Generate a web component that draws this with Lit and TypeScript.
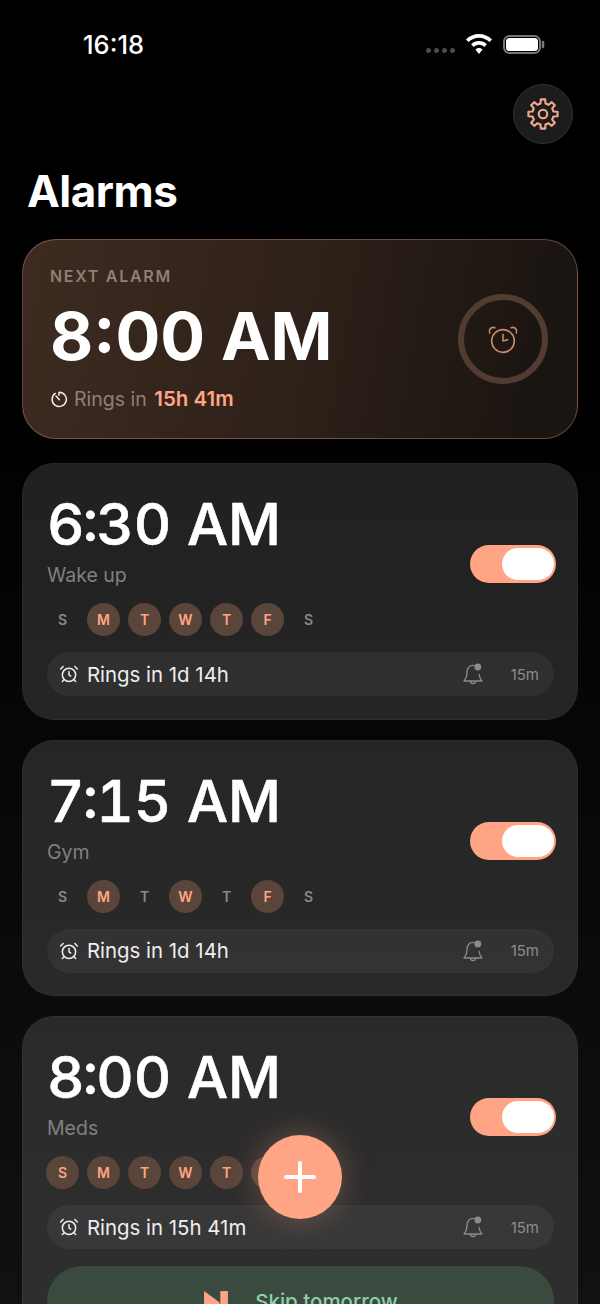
import { LitElement, html, css, svg } from 'lit';
import { customElement } from 'lit/decorators.js';

type Alarm = { hour: string; rest: string; label: string; days: boolean[]; rings: string; skip?: boolean };

const LETTERS = ['S', 'M', 'T', 'W', 'T', 'F', 'S'];

const ALARMS: Alarm[] = [
  { hour: '6', rest: '30 AM', label: 'Wake up', days: [false, true, true, true, true, true, false], rings: 'Rings in 1d 14h' },
  { hour: '7', rest: '15 AM', label: 'Gym', days: [false, true, false, true, false, true, false], rings: 'Rings in 1d 14h' },
  { hour: '8', rest: '00 AM', label: 'Meds', days: [true, true, true, true, true, true, false], rings: 'Rings in 15h 41m', skip: true }
];

// eight rounded teeth, outline built from polar points
function gearPoints() {
  const pts: string[] = [];
  for (let i = 0; i < 8; i++) {
    const a = (i * Math.PI) / 4 - Math.PI / 2;
    const step = [[-0.235, 7.6], [-0.15, 10.4], [0.15, 10.4], [0.235, 7.6]];
    for (const [d, r] of step) {
      pts.push(`${(12 + r * Math.cos(a + d)).toFixed(2)},${(12 + r * Math.sin(a + d)).toFixed(2)}`);
    }
  }
  return pts.join(' ');
}

const alarmIcon = svg`
  <circle cx="12" cy="13" r="8"></circle>
  <path d="M12 9v4l2 1.5"></path>
  <path d="M5 3 2 6"></path>
  <path d="m22 6-3-3"></path>
  <path d="M6.4 18.7 4 21"></path>
  <path d="M17.6 18.7 20 21"></path>`;

@customElement('app-root')
export class AppRoot extends LitElement {
  static styles = css`
    :host {
      display: block;
      width: 600px;
      height: 1304px;
      overflow: hidden;
      position: relative;
      background: linear-gradient(180deg, #000 0%, #000 30%, #111 100%);
      font-family: Inter, 'Noto Sans', sans-serif;
      color: #fff;
    }

    svg {
      display: block;
      fill: none;
      stroke: currentColor;
      stroke-linecap: round;
      stroke-linejoin: round;
    }

    .status {
      height: 84px;
      box-sizing: border-box;
      padding: 30px 55px 0 83px;
      display: flex;
      align-items: flex-start;
    }

    .clock {
      font-size: 25.5px;
      line-height: 29px;
      font-weight: 500;
    }

    .status-right {
      margin-left: auto;
      display: flex;
      align-items: center;
      height: 28px;
    }

    .dots {
      display: flex;
      gap: 3px;
      margin: 12px 11px 0 0;
    }

    .dots span {
      width: 5px;
      height: 5px;
      border-radius: 50%;
      background: #4a4a4a;
    }

    .wifi {
      width: 26px;
      height: 20px;
      margin-right: 11px;
      fill: #fff;
      stroke: none;
    }

    .battery {
      width: 42px;
      height: 19px;
    }

    .top {
      display: flex;
      justify-content: flex-end;
      padding-right: 27px;
    }

    .settings {
      width: 60px;
      height: 60px;
      box-sizing: border-box;
      border-radius: 50%;
      background: #1c1c1c;
      border: 1px solid #333;
      display: flex;
      align-items: center;
      justify-content: center;
      color: #f2a88a;
    }

    .settings svg {
      width: 34px;
      height: 34px;
    }

    h1 {
      margin: 20px 0 0 27px;
      font-size: 44px;
      line-height: 54px;
      font-weight: 700;
      letter-spacing: -0.5px;
    }

    .list {
      margin: 21px 22px 0;
      display: flex;
      flex-direction: column;
      gap: 20px;
    }

    .hero {
      box-sizing: border-box;
      height: 200px;
      margin-bottom: 4px;
      border-radius: 34px;
      border: 1px solid rgba(255, 180, 150, 0.32);
      background: linear-gradient(100deg, #3d2b21 0%, #2e2119 50%, #1b1511 90%);
      padding: 0 29px 0 27px;
      display: flex;
      align-items: center;
      justify-content: space-between;
    }

    .hero-text {
      align-self: flex-start;
      padding-top: 26px;
    }

    .eyebrow {
      font-size: 16px;
      line-height: 20px;
      font-weight: 600;
      letter-spacing: 1.7px;
      color: #8f7f75;
    }

    .hero-time {
      margin-top: 9px;
      font-size: 66.5px;
      line-height: 82px;
      font-weight: 700;
    }

    .hero-sub {
      margin-top: 8px;
      display: flex;
      align-items: center;
      gap: 6px;
      font-size: 19.5px;
      line-height: 28px;
      color: #8d8178;
    }

    .hero-sub svg {
      width: 18px;
      height: 18px;
      color: #f4ece6;
    }

    .hero-sub b {
      margin-left: 2px;
      font-size: 20.5px;
      font-weight: 600;
      color: #ffa585;
    }

    .ring {
      width: 90px;
      height: 90px;
      box-sizing: border-box;
      border-radius: 50%;
      border: 6px solid #523c32;
      display: flex;
      align-items: center;
      justify-content: center;
      color: #c98a68;
    }

    .ring svg {
      width: 32px;
      height: 32px;
    }

    .card {
      box-sizing: border-box;
      border-radius: 32px;
      border: 1px solid rgba(255, 255, 255, 0.03);
      background: rgba(255, 255, 255, 0.125);
      padding: 24px 23px 22.5px 24px;
    }

    .card-top {
      display: flex;
      align-items: flex-end;
      justify-content: space-between;
    }

    .time {
      font-size: 58px;
      line-height: 72px;
      font-weight: 500;
      font-variant-numeric: tabular-nums;
      -webkit-text-stroke: 0.6px #fff;
    }

    /* tabular figures drop the raised colon, so lift it by hand */
    .colon {
      display: inline-block;
      transform: translateY(-4px);
      margin: 0 -2px;
    }

    .label {
      margin-top: 2px;
      font-size: 19.5px;
      line-height: 26px;
      color: #808080;
    }

    .toggle {
      width: 86px;
      height: 38px;
      box-sizing: border-box;
      padding: 3px 2px 3px 3px;
      margin: 0 -2px 5px 0;
      border-radius: 19px;
      background: #ffa585;
      display: flex;
      justify-content: flex-end;
    }

    .knob {
      width: 52px;
      height: 32px;
      border-radius: 16px;
      background: #fff;
    }

    .days {
      display: flex;
      gap: 8px;
      margin: 15px 0 0 -1px;
    }

    .day {
      width: 33px;
      height: 33px;
      border-radius: 50%;
      display: flex;
      align-items: center;
      justify-content: center;
      font-size: 14px;
      font-weight: 600;
      color: #8a8a8a;
    }

    .day.on {
      background: #5a453b;
      color: #ffa585;
    }

    .pill {
      height: 44px;
      margin-top: 16px;
      padding: 0 15px 0 12px;
      border-radius: 22px;
      background: rgba(255, 255, 255, 0.05);
      display: flex;
      align-items: center;
      font-size: 20.4px;
      color: #eee;
    }

    .pill .alarm {
      width: 20px;
      height: 20px;
      margin-right: 8px;
    }

    .pill .bell {
      width: 24px;
      height: 24px;
      margin-left: auto;
      color: #8c8c8c;
    }

    .snooze {
      margin-left: 26px;
      font-size: 15px;
      color: #8c8c8c;
    }

    .skip {
      height: 70px;
      margin-top: 17px;
      border-radius: 35px;
      background: #3a4a3f;
      display: flex;
      align-items: center;
      justify-content: center;
      gap: 26px;
      font-size: 20.5px;
      font-weight: 500;
      color: #8fcfa5;
    }

    .skip svg {
      width: 26px;
      height: 26px;
      margin-top: 4px;
      color: #ffa585;
    }

    .fab {
      position: absolute;
      left: 258px;
      top: 1135px;
      width: 84px;
      height: 84px;
      border-radius: 50%;
      background: #ffa585;
      box-shadow: 0 0 32px rgba(255, 165, 133, 0.3);
      display: flex;
      align-items: center;
      justify-content: center;
      color: #fff;
    }

    .fab svg {
      width: 36px;
      height: 36px;
    }
  `;

  renderCard(a: Alarm) {
    return html`
      <section class="card">
        <div class="card-top">
          <div>
            <div class="time">${a.hour}<span class="colon">:</span>${a.rest}</div>
            <div class="label">${a.label}</div>
          </div>
          <div class="toggle"><div class="knob"></div></div>
        </div>
        <div class="days">
          ${LETTERS.map((l, i) => html`<div class="day ${a.days[i] ? 'on' : ''}">${l}</div>`)}
        </div>
        <div class="pill">
          <svg class="alarm" viewBox="0 0 24 24" stroke-width="1.8">${alarmIcon}</svg>
          <span>${a.rings}</span>
          <svg class="bell" viewBox="0 0 24 24" stroke-width="1.3">
            <path d="M13 3.600C9 2.800 6 6 6 10c0 5-1.300 7-3 9h18c-1.500-1.800-2.600-3.600-2.900-6.500"></path>
            <path d="M9.300 19.500a2.800 2.800 0 0 0 5.400 0"></path>
            <circle cx="16.800" cy="5" r="3.400" fill="currentColor" stroke="none"></circle>
          </svg>
          <span class="snooze">15m</span>
        </div>
        ${a.skip
          ? html`<div class="skip">
              <svg viewBox="0 0 24 24" stroke="none">
                <path d="M1 1 16 12 1 23z" fill="currentColor" stroke="none"></path>
                <path d="M16 1h7v22h-7z" fill="currentColor" stroke="none"></path>
              </svg>
              <span>Skip tomorrow</span>
            </div>`
          : ''}
      </section>
    `;
  }

  render() {
    return html`
      <div class="status">
        <div class="clock">16:18</div>
        <div class="status-right">
          <div class="dots"><span></span><span></span><span></span><span></span></div>
          <svg class="wifi" viewBox="0 0 26 20">
            <path d="M13 0C8 0 3.600 2 0 5.400l2.500 2.700C5.400 5.300 9 3.700 13 3.700s7.600 1.600 10.500 4.400L26 5.400C22.400 2 18 0 13 0z"></path>
            <path d="M13 7C10 7 7.300 8.200 5.100 10.200l2.600 2.700C9.200 11.500 11 10.700 13 10.700s3.800.8 5.300 2.200l2.600-2.700C18.700 8.200 16 7 13 7z"></path>
            <path d="M13 14c-1.400 0-2.700.6-3.600 1.500L13 20l3.600-4.500C15.700 14.600 14.400 14 13 14z"></path>
          </svg>
          <svg class="battery" viewBox="0 0 42 19">
            <rect x="1" y="1" width="36" height="17" rx="5.500" stroke="#777" stroke-width="2"></rect>
            <rect x="3" y="3" width="32" height="13" rx="3.500" fill="#fff" stroke="none"></rect>
            <path d="M40 7v5" stroke="#777" stroke-width="2.500"></path>
          </svg>
        </div>
      </div>

      <div class="top">
        <div class="settings">
          <svg viewBox="0 0 24 24" stroke-width="1.5">
            <polygon points=${gearPoints()}></polygon>
            <circle cx="12" cy="12" r="3"></circle>
          </svg>
        </div>
      </div>

      <h1>Alarms</h1>

      <div class="list">
        <section class="hero">
          <div class="hero-text">
            <div class="eyebrow">NEXT ALARM</div>
            <div class="hero-time">8:00 AM</div>
            <div class="hero-sub">
              <svg viewBox="0 0 24 24" stroke-width="2">
                <path d="M7 4.600A9.500 9.500 0 1 0 12 3v4"></path>
                <path d="m8 8 4.500 5"></path>
              </svg>
              <span>Rings in <b>15h 41m</b></span>
            </div>
          </div>
          <div class="ring">
            <svg viewBox="0 0 24 24" stroke-width="1.200">
              <circle cx="12" cy="13.500" r="8.500"></circle>
              <path d="M12 8.500v5l3.500-1"></path>
              <path d="M2 7.500C1 5 3 2.500 6 3.500"></path>
              <path d="M22 7.500C23 5 21 2.500 18 3.500"></path>
            </svg>
          </div>
        </section>
        ${ALARMS.map(a => this.renderCard(a))}
      </div>

      <div class="fab">
        <svg viewBox="0 0 36 36" stroke-width="4">
          <path d="M18 4v28M4 18h28"></path>
        </svg>
      </div>
    `;
  }
}
